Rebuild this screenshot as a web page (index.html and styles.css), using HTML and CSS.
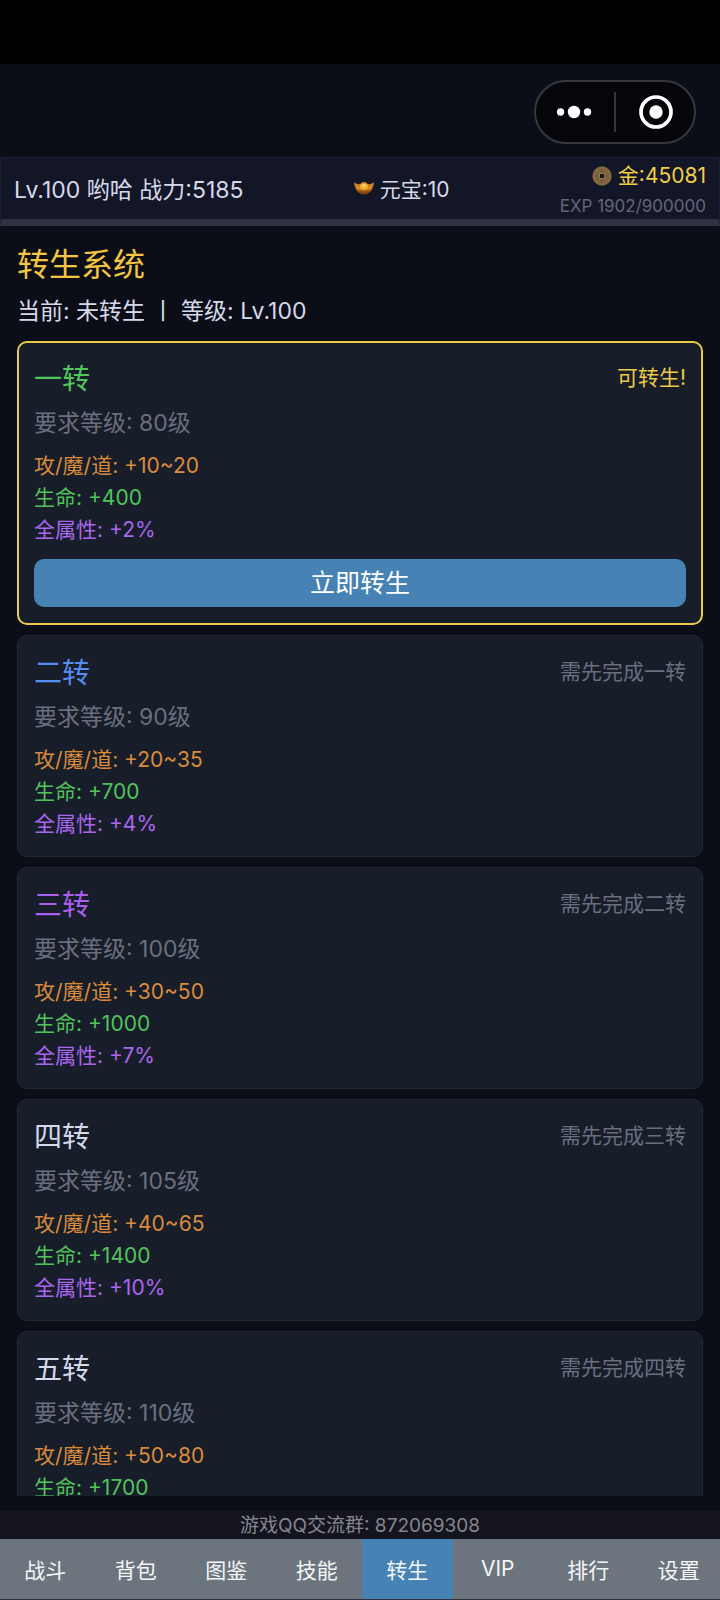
FILE: index.html
```html
<!DOCTYPE html>
<html lang="zh-CN">
<head>
<meta charset="utf-8">
<meta name="viewport" content="width=device-width, initial-scale=1">
<title>转生系统</title>
<link rel="stylesheet" href="styles.css">
</head>
<body>
<div class="app">
  <div class="system-bar"></div>
  <header class="titlebar">
    <div class="capsule">
      <button class="capsule-btn" type="button" aria-label="更多">
        <svg width="36" height="36" viewBox="0 0 36 36"><g fill="#fff"><circle cx="3.500" cy="18" r="3.700"/><circle cx="17" cy="18" r="6.200"/><circle cx="30.500" cy="18" r="3.700"/></g></svg>
      </button>
      <button class="capsule-btn" type="button" aria-label="关闭">
        <svg width="36" height="36" viewBox="0 0 36 36"><circle cx="19" cy="18" r="15" fill="none" stroke="#fff" stroke-width="3.700"/><circle cx="19" cy="18" r="6.700" fill="#fff"/></svg>
      </button>
    </div>
  </header>

  <section class="status">
    <div class="player">Lv.100 哟哈 战力:5185</div>
    <div class="ingots">
      <svg width="20" height="14" viewBox="0 0 20 14">
        <defs><linearGradient id="ingot" x1="0" y1="0" x2="0" y2="1"><stop offset="0" stop-color="#d98a2b"/><stop offset="0.500" stop-color="#c9741a"/><stop offset="1" stop-color="#6b3410"/></linearGradient></defs>
        <path d="M0 1.500Q3 3.500 6 3.200Q10 -1 14 3.200Q17 3.500 20 1.500Q19 10 13.500 13Q10 14.200 6.500 13Q1 10 0 1.500Z" fill="url(#ingot)"/>
        <ellipse cx="10" cy="5.500" rx="4" ry="3" fill="#eeb03a"/>
        <ellipse cx="10" cy="4.500" rx="2" ry="1.300" fill="#f8cf6a"/>
        <path d="M3 6Q10 11 17 6" fill="none" stroke="#eda236" stroke-width="1.300"/>
      </svg>
      <span>元宝:10</span>
    </div>
    <div class="wealth">
      <div class="gold">
        <svg width="20" height="20" viewBox="0 0 20 20">
          <circle cx="10" cy="10" r="9.700" fill="#7f633d"/>
          <circle cx="10" cy="10" r="8.300" fill="none" stroke="#8b6e45" stroke-width="1"/>
          <path d="M9 3h2v3H9zM9 14h2v3H9zM3.500 9h3v2h-3zM13.500 9h3v2h-3z" fill="#745a38"/>
          <rect x="7" y="7" width="6" height="6" fill="#8f7249"/>
          <rect x="8" y="8" width="4" height="4" fill="#171722"/>
        </svg>
        <span>金:45081</span>
      </div>
      <div class="exp">EXP 1902/900000</div>
    </div>
  </section>

  <main class="content">
    <h1 class="heading">转生系统</h1>
    <p class="current">当前: 未转生 丨 等级: Lv.100</p>
    <div class="cards">
      <article class="card card-ready">
        <div class="card-head"><h2 class="rank rank-green">一转</h2><span class="state state-ready">可转生!</span></div>
        <p class="need">要求等级: 80级</p>
        <ul class="stats"><li class="power">攻/魔/道: +10~20</li><li class="life">生命: +400</li><li class="all">全属性: +2%</li></ul>
        <button class="rebirth" type="button">立即转生</button>
      </article>
      <article class="card">
        <div class="card-head"><h2 class="rank rank-blue">二转</h2><span class="state">需先完成一转</span></div>
        <p class="need">要求等级: 90级</p>
        <ul class="stats"><li class="power">攻/魔/道: +20~35</li><li class="life">生命: +700</li><li class="all">全属性: +4%</li></ul>
      </article>
      <article class="card">
        <div class="card-head"><h2 class="rank rank-purple">三转</h2><span class="state">需先完成二转</span></div>
        <p class="need">要求等级: 100级</p>
        <ul class="stats"><li class="power">攻/魔/道: +30~50</li><li class="life">生命: +1000</li><li class="all">全属性: +7%</li></ul>
      </article>
      <article class="card">
        <div class="card-head"><h2 class="rank">四转</h2><span class="state">需先完成三转</span></div>
        <p class="need">要求等级: 105级</p>
        <ul class="stats"><li class="power">攻/魔/道: +40~65</li><li class="life">生命: +1400</li><li class="all">全属性: +10%</li></ul>
      </article>
      <article class="card">
        <div class="card-head"><h2 class="rank">五转</h2><span class="state">需先完成四转</span></div>
        <p class="need">要求等级: 110级</p>
        <ul class="stats"><li class="power">攻/魔/道: +50~80</li><li class="life">生命: +1700</li></ul>
      </article>
    </div>
  </main>

  <div class="group">游戏QQ交流群: 872069308</div>
  <nav class="tabs">
    <button class="tab" type="button">战斗</button>
    <button class="tab" type="button">背包</button>
    <button class="tab" type="button">图鉴</button>
    <button class="tab" type="button">技能</button>
    <button class="tab tab-active" type="button" aria-current="page">转生</button>
    <button class="tab" type="button">VIP</button>
    <button class="tab" type="button">排行</button>
    <button class="tab" type="button">设置</button>
  </nav>
</div>
</body>
</html>
```
FILE: styles.css
```css
* {
  box-sizing: border-box;
}

body {
  margin: 0;
  background: #0b0e17;
  color: #d6d9ea;
  font-family: Inter, "Noto Sans CJK SC", sans-serif;
  font-weight: 400;
}

h1, h2, p, ul {
  margin: 0;
  padding: 0;
  font-weight: inherit;
}

ul {
  list-style: none;
}

button {
  margin: 0;
  padding: 0;
  border: 0;
  background: none;
  color: inherit;
  font: inherit;
}

svg {
  display: block;
  flex: none;
}

.app {
  display: flex;
  flex-direction: column;
  height: 100vh;
  overflow: hidden;
}

.system-bar {
  flex: none;
  height: 64px;
  background: #000;
}

.titlebar {
  display: flex;
  flex: none;
  justify-content: flex-end;
  padding: 16px 24px 13px;
}

.capsule {
  display: flex;
  width: 162px;
  height: 64px;
  padding: 10px 0;
  border: 2px solid #37383d;
  border-radius: 32px;
  background: #05060a;
}

.capsule-btn {
  display: flex;
  flex: 1;
  align-items: center;
  justify-content: center;
}

.capsule-btn + .capsule-btn {
  border-left: 2px solid #37383d;
}

.status {
  display: flex;
  flex: none;
  align-items: center;
  justify-content: space-between;
  height: 69px;
  padding: 0 13px;
  border: 1px solid #1b1e2c;
  border-bottom: 7px solid #2f3240;
  background: #131626;
  white-space: nowrap;
}

.player {
  padding-bottom: 1px;
  font-size: 23px;
}

.ingots {
  display: flex;
  align-items: center;
  gap: 6px;
  padding-bottom: 1px;
  font-size: 21px;
}

.wealth {
  display: flex;
  flex-direction: column;
  align-items: flex-end;
  padding-top: 2px;
}

.gold {
  display: flex;
  align-items: center;
  gap: 6px;
  color: #f0cd47;
  font-size: 21px;
  line-height: 32px;
}

.exp {
  color: #62667a;
  font-size: 17px;
  line-height: 28px;
}

.content {
  flex: 1;
  min-height: 0;
  margin-bottom: 15px;
  padding: 15px 17px 0;
  overflow: hidden;
}

.heading {
  color: #f3c544;
  font-size: 32px;
  line-height: 48px;
}

.current {
  margin: 4px 0 12px;
  font-size: 23px;
  line-height: 36px;
}

.cards {
  display: flex;
  flex-direction: column;
  gap: 10px;
}

.card {
  padding: 17px 16px 16px;
  border: 1px solid #232838;
  border-radius: 10px;
  background: #181d2a;
}

.card-ready {
  padding: 16px 15px;
  border: 2px solid #ecc94b;
}

.card-head {
  display: flex;
  align-items: flex-start;
  justify-content: space-between;
}

.rank {
  font-size: 28px;
  line-height: 40px;
}

.rank-green {
  color: #4fc95a;
}

.rank-blue {
  color: #568df0;
}

.rank-purple {
  color: #a95ff0;
}

.state {
  color: #6a6f7f;
  font-size: 21px;
  line-height: 38px;
}

.state-ready {
  color: #edc948;
}

.need {
  margin: 8px 0 11px;
  color: #6a6f7f;
  font-size: 23px;
  line-height: 32px;
}

.stats {
  font-size: 21px;
  line-height: 32px;
}

.power {
  color: #d98b3c;
}

.life {
  color: #50c45a;
}

.all {
  color: #a966ee;
}

.rebirth {
  display: block;
  width: 100%;
  height: 48px;
  margin-top: 13px;
  padding-bottom: 4px;
  border-radius: 10px;
  background: #4682b4;
  color: #fff;
  font-size: 25px;
}

.group {
  flex: none;
  padding-top: 2px;
  background: #14141e;
  color: #858691;
  font-size: 19px;
  line-height: 26px;
  text-align: center;
}

.tabs {
  display: grid;
  flex: none;
  grid-template-columns: repeat(8, 1fr);
  height: 61px;
  margin-right: -4px;
  border-bottom: 1px solid #2f3240;
  background: #6c757d;
}

.tab {
  padding-bottom: 1px;
  color: #f4f6f8;
  font-size: 21px;
}

.tab-active {
  background: #4682b4;
}
```
